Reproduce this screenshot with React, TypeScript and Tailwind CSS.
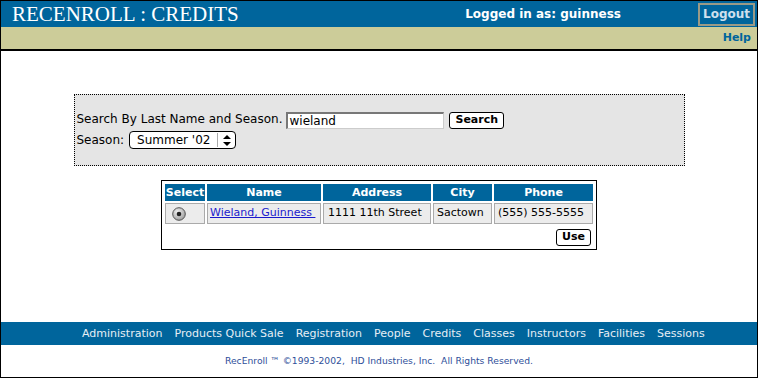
import React from "react";

const navItems = [
  "Administration",
  "Products Quick Sale",
  "Registration",
  "People",
  "Credits",
  "Classes",
  "Instructors",
  "Facilities",
  "Sessions",
];

export default function App() {
  return (
    <div className="w-[759px] h-[380px] bg-white">
      <div className="w-[758px] h-[378px] border border-black flex flex-col font-['DejaVu_Sans',sans-serif]">
        {/* header */}
        <div className="h-[26px] bg-[#00659c] flex items-center pl-[11px] pr-[2px]">
          <div className="font-['Liberation_Serif',serif] text-white text-[21px] leading-none flex-1">
            RECENROLL : CREDITS
          </div>
          <div className="text-white font-bold text-[12px] mr-[77px]">Logged in as: guinness</div>
          <div className="h-[23px] px-[3px] border-2 border-[#9a9a86] bg-[#00659c] text-[#cfe0ee] font-bold text-[12px] flex items-center">
            Logout
          </div>
        </div>
        <div className="h-[24px] bg-[#cccc99] border-b-2 border-black flex items-center justify-end pr-[6px]">
          <span className="text-[#00659c] font-bold text-[11px]">Help</span>
        </div>
        {/* main */}
        <div className="flex-1 flex flex-col items-center pt-[43px]">
          <div className="w-[611px] h-[72px] border border-dotted border-black bg-[#e5e5e5] pl-[2px] pt-[16px] text-[12px] text-black">
            <div className="flex items-end h-[18px]">
              <span className="mb-[1px]">Search By Last Name and Season.</span>
              <div className="ml-[4px] w-[158px] h-[17px] bg-white border-t-2 border-l-2 border-[#777] border-b border-r border-b-[#ccc] border-r-[#ccc] text-[12px] leading-[14px] pl-[1px]">
                wieland
              </div>
              <div className="ml-[5px] h-[17px] px-[5px] bg-white border border-black rounded-[3px] font-bold text-[11px] flex items-center">
                Search
              </div>
            </div>
            <div className="flex items-center mt-[2px]">
              <span>Season:</span>
              <div className="ml-[5px] w-[107px] h-[18px] bg-white border border-black rounded-[4px] flex items-center text-[12px]">
                <span className="pl-[7px] flex-1 whitespace-nowrap">Summer '02</span>
                <span className="border-l border-[#aaa] h-[14px] w-[18px] flex items-center justify-center">
                  <svg width="8" height="11" viewBox="0 0 8 11">
                    <path d="M4 0 L8 4 L0 4 Z" fill="#000" />
                    <path d="M0 7 L8 7 L4 11 Z" fill="#000" />
                  </svg>
                </span>
              </div>
            </div>
          </div>
          {/* table */}
          <div className="mt-[14px] w-[436px] border border-black p-[1px]">
            <table className="border-separate border-spacing-[2px] text-[11px] whitespace-nowrap w-full table-fixed">
              <colgroup>
                <col className="w-[40px]" />
                <col className="w-[114px]" />
                <col className="w-[108px]" />
                <col className="w-[59px]" />
                <col />
              </colgroup>
              <thead>
                <tr className="text-white font-bold text-[11px]">
                  <th className="bg-[#00659c] h-[17px] p-0 font-bold leading-[17px]">Select</th>
                  <th className="bg-[#00659c] h-[17px] p-0 font-bold leading-[17px]">Name</th>
                  <th className="bg-[#00659c] h-[17px] p-0 font-bold leading-[17px]">Address</th>
                  <th className="bg-[#00659c] h-[17px] p-0 font-bold leading-[17px]">City</th>
                  <th className="bg-[#00659c] h-[17px] p-0 font-bold leading-[17px]">Phone</th>
                </tr>
              </thead>
              <tbody>
                <tr>
                  <td className="h-[21px] bg-[#ececec] border border-[#aaa] p-0">
                    <div className="flex justify-start pl-[6px]">
                      <svg width="14" height="14" viewBox="0 0 14 14">
                        <defs>
                          <radialGradient id="rg" cx="40%" cy="35%" r="70%">
                            <stop offset="0%" stopColor="#f4f4f4" />
                            <stop offset="100%" stopColor="#9a9a9a" />
                          </radialGradient>
                        </defs>
                        <circle cx="7" cy="7" r="6.3" fill="url(#rg)" stroke="#555" strokeWidth="1" />
                        <circle cx="7" cy="7" r="2.3" fill="#222" />
                      </svg>
                    </div>
                  </td>
                  <td className="bg-[#ececec] border border-[#aaa] p-0 px-[2px] text-left">
                    <span className="text-[#1a1acc] underline">Wieland, Guinness&nbsp;</span>
                  </td>
                  <td className="bg-[#ececec] border border-[#aaa] p-0 px-[4px] text-left">1111 11th Street</td>
                  <td className="bg-[#ececec] border border-[#aaa] p-0 px-[3px] text-left">Sactown</td>
                  <td className="bg-[#ececec] border border-[#aaa] p-0 px-[3px] text-left">(555) 555-5555</td>
                </tr>
                <tr>
                  <td colSpan={5} className="p-0 pt-[3px] pr-[2px]">
                    <div className="flex justify-end">
                      <div className="h-[17px] px-[5px] bg-white border border-black rounded-[3px] font-bold text-[11px] flex items-center">
                        Use
                      </div>
                    </div>
                  </td>
                </tr>
              </tbody>
            </table>
          </div>
        </div>
        {/* footer */}
        <div className="h-[23px] bg-[#00659c] flex items-center justify-start pl-[81px] pt-[2px] gap-[12px] text-[11px] text-[#e6eef5]">
          {navItems.map((n) => (
            <span key={n}>{n}</span>
          ))}
        </div>
        <div className="h-[32px] flex items-center justify-center text-[9.2px] text-[#2f4f9a]">
          RecEnroll ™ ©1993-2002,&nbsp; HD Industries, Inc.&nbsp; All Rights Reserved.
        </div>
      </div>
    </div>
  );
}
